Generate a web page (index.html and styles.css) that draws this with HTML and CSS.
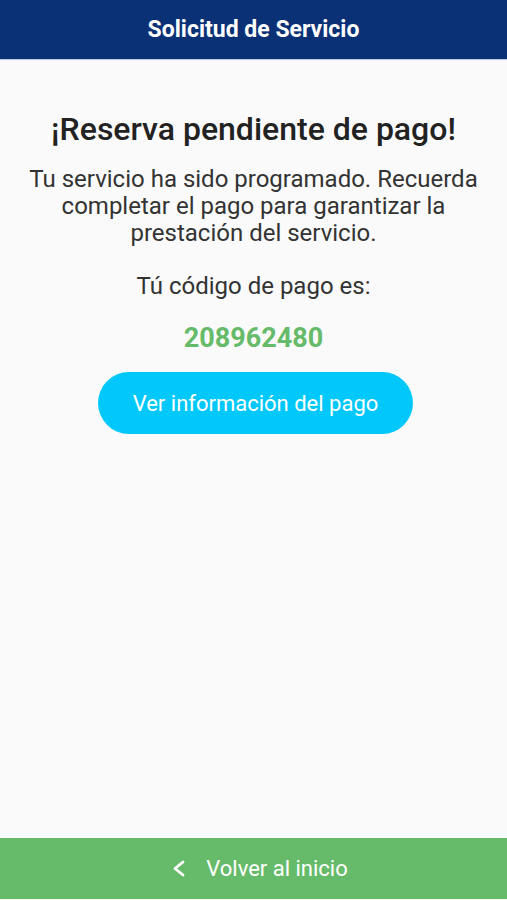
FILE: index.html
```html
<!DOCTYPE html>
<html lang="es">
<head>
<meta charset="utf-8">
<title>Solicitud de Servicio</title>
<link rel="stylesheet" href="styles.css">
</head>
<body>
<div class="app">
  <header class="topbar">
    <h1 class="topbar-title">Solicitud de Servicio</h1>
  </header>
  <main class="content">
    <h2 class="title">¡Reserva pendiente de pago!</h2>
    <p class="message">Tu servicio ha sido programado. Recuerda completar el pago para garantizar la prestación del servicio.</p>
    <p class="code-label">Tú código de pago es:</p>
    <p class="code">208962480</p>
    <button class="pay-btn" type="button">Ver información del pago</button>
  </main>
  <footer class="bottombar">
    <svg class="chev" width="15" height="19" viewBox="0 0 15 19" aria-hidden="true"><path d="M12 3 L4 9.5 L12 16" fill="none" stroke="#fff" stroke-width="2.8" stroke-linecap="round" stroke-linejoin="round"/></svg>
    <span class="back-text">Volver al inicio</span>
  </footer>
</div>
</body>
</html>
```
FILE: styles.css
```css
html, body {
  margin: 0;
  padding: 0;
}
body {
  font-family: Roboto, "Liberation Sans", sans-serif;
  background: #fafafa;
}
.app {
  height: 900px;
  display: flex;
  flex-direction: column;
  background: #fafafa;
}
.topbar {
  height: 60px;
  flex: none;
  background: #0a3075;
  border-bottom: 1px solid #b8c8e6;
  box-sizing: border-box;
  display: flex;
  align-items: center;
  justify-content: center;
}
.topbar-title {
  margin: 0;
  color: #fff;
  font-size: 23px;
  font-weight: 700;
}
.content {
  flex: 1;
  display: flex;
  flex-direction: column;
  align-items: center;
  padding: 50px 20px 0;
  text-align: center;
}
.title {
  margin: 0;
  font-size: 32px;
  line-height: 38px;
  font-weight: 500;
  color: #222;
}
.message {
  margin: 18px 0 0;
  font-size: 24px;
  line-height: 27px;
  color: #333;
  max-width: 465px;
}
.code-label {
  margin: 26px 0 0;
  font-size: 24px;
  line-height: 27px;
  color: #333;
}
.code {
  margin: 22px 0 0;
  font-size: 27px;
  line-height: 32px;
  font-weight: 700;
  color: #66bb6a;
}
.pay-btn {
  margin: 18px 0 0 4px;
  width: 315px;
  height: 62px;
  border: none;
  border-radius: 31px;
  background: #00c8fa;
  color: #fff;
  font-family: Roboto, "Liberation Sans", sans-serif;
  font-size: 22px;
  padding: 0;
}
.bottombar {
  height: 61px;
  flex: none;
  margin-bottom: 1px;
  padding-left: 12px;
  background: #66bb6a;
  display: flex;
  align-items: center;
  justify-content: center;
  gap: 20px;
}
.chev {
  display: block;
}
.back-text {
  color: #fff;
  font-size: 22px;
}
```
